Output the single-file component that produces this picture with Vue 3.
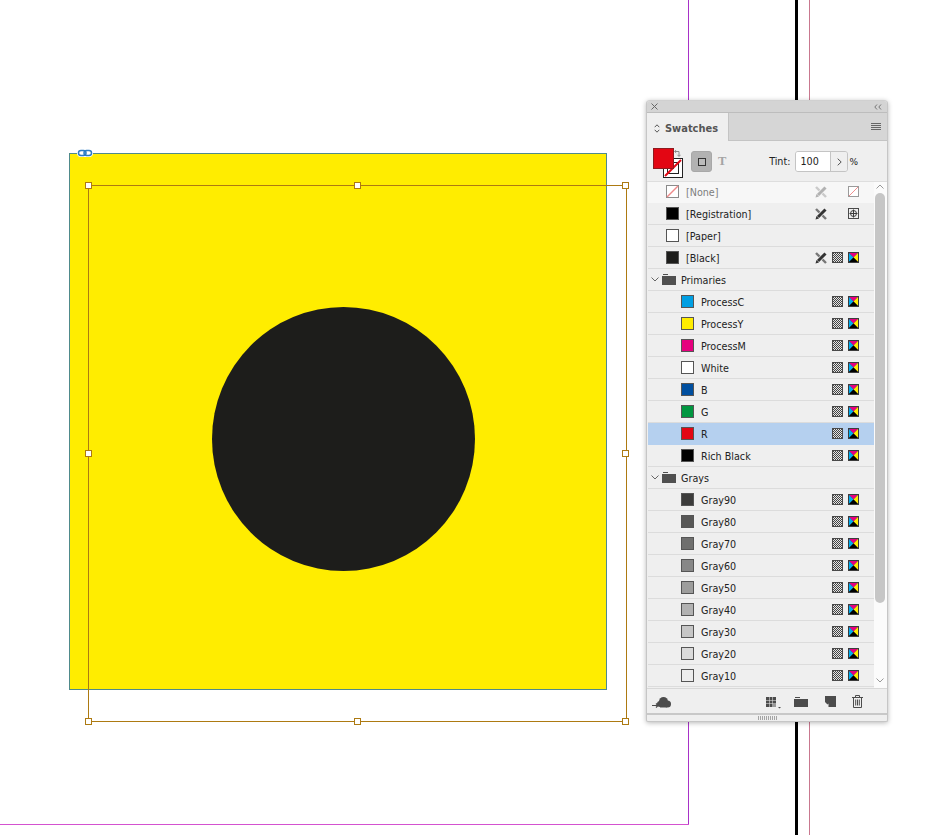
<template>
  <div class="page">
    <!-- icon sprites -->
    <svg class="sprites" width="0" height="0">
      <defs>
        <pattern id="checker" width="2" height="2" patternUnits="userSpaceOnUse">
          <rect width="2" height="2" fill="#e4e4e4" />
          <rect width="1" height="1" fill="#444" />
          <rect x="1" y="1" width="1" height="1" fill="#444" />
        </pattern>
        <symbol id="i-pencil" viewBox="0 0 12 12">
          <path d="M1 1 11 11" stroke="#777" stroke-width="2.4" fill="none" />
          <path d="M10.5 1.5 2.5 9.5" stroke="#f0f0f0" stroke-width="4.2" fill="none" />
          <path d="M10.5 1.5 3 9" stroke="currentColor" stroke-width="3" fill="none" />
          <path d="M.5 11.5 1.5 8 4 10.5Z" fill="currentColor" />
        </symbol>
        <symbol id="i-grid" viewBox="0 0 11 11">
          <rect x=".5" y=".5" width="10" height="10" fill="url(#checker)" stroke="#4a4a4a" />
        </symbol>
        <symbol id="i-cmyk" viewBox="0 0 11 11">
          <rect width="11" height="11" fill="#3c3c3c" />
          <path d="M1 1H10L5.5 5.5Z" fill="#e6007e" />
          <path d="M1 1V10L5.5 5.5Z" fill="#00aeef" />
          <path d="M10 1V10L5.5 5.5Z" fill="#ffed00" />
          <path d="M1 10H10L5.5 5.5Z" fill="#000" />
        </symbol>
        <symbol id="i-reg" viewBox="0 0 11 11">
          <rect x=".5" y=".5" width="10" height="10" fill="none" stroke="#4a4a4a" />
          <circle cx="5.5" cy="5.5" r="3" fill="none" stroke="#3a3a3a" />
          <path d="M5.5 1.5V9.5M1.5 5.5H9.5" stroke="#3a3a3a" />
        </symbol>
        <symbol id="i-none" viewBox="0 0 11 11">
          <rect x=".5" y=".5" width="10" height="10" fill="#fff" stroke="#9a9a9a" />
          <path d="M1 10 10 1" stroke="#ef8f8f" />
        </symbol>
      </defs>
    </svg>

    <!-- layout guides -->
    <div class="guide guide--margin-v"></div>
    <div class="guide guide--margin-h"></div>
    <div class="guide guide--spine"></div>
    <div class="guide guide--bleed"></div>

    <!-- artwork -->
    <div class="art"></div>
    <div class="circle"></div>
    <div class="frame"></div>
    <span v-for="h in handles" :key="h.x + '-' + h.y" class="handle" :style="{ left: h.x + 'px', top: h.y + 'px' }"></span>
    <svg class="link" width="16" height="8" viewBox="0 0 16 8">
      <rect width="16" height="8" rx="4" fill="#fff" />
      <rect x="1.5" y="1.5" width="7.5" height="5" rx="2.5" fill="none" stroke="#2d7cc6" stroke-width="1.5" />
      <rect x="7" y="1.5" width="7.5" height="5" rx="2.5" fill="none" stroke="#2d7cc6" stroke-width="1.5" />
    </svg>

    <!-- swatches panel -->
    <div class="panel">
      <div class="panel-top">
        <svg class="close" width="7" height="7" viewBox="0 0 7 7"><path d="M.5.5 6.5 6.5M6.5.5.5 6.5" stroke="#666" /></svg>
        <svg class="collapse" width="8" height="6" viewBox="0 0 8 6"><path d="M3 .5.8 3 3 5.5M7 .5 4.8 3 7 5.5" stroke="#777" fill="none" /></svg>
      </div>

      <div class="tabs">
        <div class="tab">
          <svg width="6" height="9" viewBox="0 0 6 9"><path d="M.7 3.2 3 .8 5.3 3.2M.7 5.8 3 8.2 5.3 5.8" stroke="#555" fill="none" /></svg>
          <span>Swatches</span>
        </div>
        <div class="menu"><i></i><i></i><i></i><i></i></div>
      </div>

      <div class="controls">
        <div class="fill-stroke">
          <div class="stroke-box">
            <svg width="20" height="20" viewBox="0 0 20 20">
              <rect x=".5" y=".5" width="19" height="19" fill="#fff" stroke="#222" />
              <rect x="4.5" y="4.5" width="11" height="11" fill="none" stroke="#222" />
              <path d="M2 18 18 2" stroke="#e30613" stroke-width="2" />
            </svg>
          </div>
          <div class="fill-box"></div>
          <svg class="swap" width="7" height="7" viewBox="0 0 7 7"><path d="M1 1.5H5V6M3.5 4.8 5 6.5 6.5 4.8M2.2.2.5 1.5 2.2 2.8" stroke="#8a8a8a" fill="none" /></svg>
        </div>
        <div class="apply"><span></span></div>
        <span class="text-t">T</span>
        <span class="tint-label">Tint:</span>
        <div class="tint">
          <span class="tint-value">100</span>
          <span class="tint-step">
            <svg width="5" height="8" viewBox="0 0 5 8"><path d="M.7.7 4.2 4 .7 7.3" stroke="#555" fill="none" /></svg>
          </span>
        </div>
        <span class="percent">%</span>
      </div>

      <div class="list-wrap">
        <div class="list">
          <div
            v-for="r in rows"
            :key="r.name"
            class="row"
            :class="{ 'row--none': r.kind === 'none', 'row--sel': r.name === 'R', 'row--nested': r.nested }"
          >
            <template v-if="r.kind === 'group'">
              <svg class="chev" width="8" height="5" viewBox="0 0 8 5"><path d="M.5.5 4 4 7.5.5" stroke="#666" fill="none" /></svg>
              <svg class="folder" width="14" height="11" viewBox="0 0 14 11"><path d="M0 2H14V11H0ZM1 0H6V1H1Z" fill="#505050" /></svg>
            </template>
            <svg v-else-if="r.kind === 'none'" class="sw" width="13" height="13" viewBox="0 0 13 13">
              <rect x=".5" y=".5" width="12" height="12" fill="#fff" stroke="#8a8a8a" />
              <path d="M1 12 12 1" stroke="#ee8a8a" stroke-width="1.4" />
            </svg>
            <span v-else class="sw" :style="{ background: r.color }"></span>

            <span class="name">{{ r.name }}</span>

            <span class="icons">
              <svg v-if="r.pencil" class="ic ic--pencil" :class="{ 'ic--faded': r.kind === 'none' }"><use href="#i-pencil" /></svg>
              <svg v-if="r.kind === 'none'" class="ic ic--right"><use href="#i-none" /></svg>
              <svg v-else-if="r.reg" class="ic ic--right"><use href="#i-reg" /></svg>
              <template v-else-if="r.mode">
                <svg class="ic"><use href="#i-grid" /></svg>
                <svg class="ic"><use href="#i-cmyk" /></svg>
              </template>
            </span>
          </div>
        </div>
        <div class="scroll">
          <svg class="arrow" width="8" height="5" viewBox="0 0 8 5"><path d="M.5 4.5 4 1 7.5 4.5" stroke="#999" fill="none" /></svg>
          <div class="thumb"></div>
          <svg class="arrow arrow--down" width="8" height="5" viewBox="0 0 8 5"><path d="M.5.5 4 4 7.5.5" stroke="#999" fill="none" /></svg>
        </div>
      </div>

      <div class="footer">
        <svg class="cloud" width="19" height="12" viewBox="0 0 19 12">
          <circle cx="11.5" cy="4.5" r="4.5" fill="#4c4c4c" />
          <circle cx="8" cy="7" r="3" fill="#4c4c4c" />
          <circle cx="15.5" cy="7" r="3.5" fill="#4c4c4c" />
          <path d="M8 7H15V10.5H8Z" fill="#4c4c4c" />
          <path d="M0 8.5H5.5M4 6.5 6 8.5 4 10.5" stroke="#4c4c4c" fill="none" stroke-width="1.2" />
        </svg>
        <svg class="f-grid" width="15" height="12" viewBox="0 0 15 12">
          <path d="M0 0H3V3H0ZM3.5 0H6.5V3H3.5ZM7 0H10V3H7ZM0 3.5H3V6.5H0ZM7 3.5H10V6.5H7ZM0 7H3V10H0ZM3.5 7H6.5V10H3.5ZM3.5 3.5H6.5V6.5H3.5Z" fill="#4c4c4c" />
          <path d="M7 7H10V10H7Z" fill="#9a9a9a" />
          <path d="M12 10H15L13.5 11.5Z" fill="#4c4c4c" />
        </svg>
        <svg class="f-folder" width="14" height="10" viewBox="0 0 14 10"><path d="M0 2H14V10H0ZM1 0H6V1H1Z" fill="#4c4c4c" /></svg>
        <svg class="f-new" width="11" height="11" viewBox="0 0 11 11"><path d="M0 0H11V11H3.5V7.5L2.5 8.5 0 6Z" fill="#4c4c4c" /></svg>
        <svg class="f-trash" width="11" height="13" viewBox="0 0 11 13">
          <path d="M0 2.5H11M3.5 2.5V.5H7.5V2.5M1.5 2.5V12.5H9.5V2.5M3.7 4.5V10.5M5.5 4.5V10.5M7.3 4.5V10.5" stroke="#4c4c4c" fill="none" />
        </svg>
      </div>
      <div class="grip"><span></span></div>
    </div>
  </div>
</template>

<script setup>
const handles = [
  { x: 85, y: 182 }, { x: 354, y: 182 }, { x: 622, y: 182 },
  { x: 85, y: 450 }, { x: 622, y: 450 },
  { x: 85, y: 718 }, { x: 354, y: 718 }, { x: 622, y: 718 },
]

const item = (name, color) => ({ name, color, nested: true, mode: true })

const rows = [
  { name: '[None]', kind: 'none', pencil: true },
  { name: '[Registration]', color: '#000', pencil: true, reg: true },
  { name: '[Paper]', color: '#fff' },
  { name: '[Black]', color: '#1d1d1b', pencil: true, mode: true },
  { name: 'Primaries', kind: 'group' },
  item('ProcessC', '#009fe3'),
  item('ProcessY', '#ffed00'),
  item('ProcessM', '#e6007e'),
  item('White', '#fff'),
  item('B', '#004f9f'),
  item('G', '#009640'),
  item('R', '#e30613'),
  item('Rich Black', '#000'),
  { name: 'Grays', kind: 'group' },
  item('Gray90', '#3c3c3b'),
  item('Gray80', '#575756'),
  item('Gray70', '#6f6f6e'),
  item('Gray60', '#878787'),
  item('Gray50', '#9d9d9c'),
  item('Gray40', '#b2b2b2'),
  item('Gray30', '#c6c6c6'),
  item('Gray20', '#dadada'),
  item('Gray10', '#ededed'),
]
</script>

<style scoped>
.page {
  position: relative;
  width: 942px;
  height: 835px;
  overflow: hidden;
  background: #fff;
  font-family: "DejaVu Sans", sans-serif;
  color: #222;
}
.sprites { position: absolute; }

.guide { position: absolute; }
.guide--margin-v { left: 688px; top: 0; width: 1px; height: 825px; background: #a832c8; }
.guide--margin-h { left: 0; top: 824px; width: 689px; height: 1px; background: #d452d0; }
.guide--spine { left: 795px; top: 0; width: 3px; height: 835px; background: #000; }
.guide--bleed { left: 809px; top: 0; width: 1px; height: 835px; background: #c9788f; }

.art {
  position: absolute;
  left: 69px;
  top: 153px;
  width: 536px;
  height: 535px;
  background: #ffed00;
  border: 1px solid #4f8a8b;
}
.circle {
  position: absolute;
  left: 212px;
  top: 307px;
  width: 263px;
  height: 264px;
  border-radius: 50%;
  background: #1d1d1b;
}
.frame {
  position: absolute;
  left: 88px;
  top: 185px;
  width: 537px;
  height: 535px;
  border: 1px solid #ad7a12;
}
.handle {
  position: absolute;
  width: 5px;
  height: 5px;
  background: #fff;
  border: 1px solid #ad7a12;
}
.link { position: absolute; left: 77px; top: 149px; }

.panel {
  position: absolute;
  left: 646px;
  top: 100px;
  width: 242px;
  height: 622px;
  box-sizing: border-box;
  display: flex;
  flex-direction: column;
  background: #efefef;
  border: 1px solid #c6c6c6;
  border-top-color: #d0d0d0;
  border-radius: 4px 4px 2px 2px;
  box-shadow: 0 1px 5px rgba(0, 0, 0, 0.28);
}
.panel-top {
  height: 11px;
  display: flex;
  align-items: center;
  justify-content: space-between;
  padding: 0 5px 0 4px;
  background: #d4d4d4;
  border-bottom: 1px solid #bdbdbd;
  border-radius: 3px 3px 0 0;
}
.tabs {
  height: 27px;
  display: flex;
  justify-content: space-between;
  background: #d6d6d6;
  border-bottom: 1px solid #c4c4c4;
}
.tab {
  width: 82px;
  margin-bottom: -1px;
  display: flex;
  align-items: center;
  gap: 5px;
  padding: 2px 0 0 7px;
  box-sizing: border-box;
  background: #efefef;
  border-right: 1px solid #c4c4c4;
  font-size: 9.9px;
  font-weight: 700;
  color: #555;
}
.menu {
  display: flex;
  flex-direction: column;
  justify-content: center;
  gap: 1px;
  margin-right: 6px;
}
.menu i { display: block; width: 10px; height: 1px; background: #666; }

.controls {
  height: 40px;
  box-sizing: border-box;
  padding-top: 1px;
  display: flex;
  align-items: center;
  position: relative;
}
.fill-stroke {
  position: relative;
  align-self: flex-start;
  width: 31px;
  height: 31px;
  margin: 6px 0 0 6px;
}
.fill-box {
  position: absolute;
  left: 0;
  top: 0;
  width: 19px;
  height: 19px;
  background: #e30613;
  border: 1px solid #8e1b1f;
}
.stroke-box { position: absolute; left: 10px; top: 10px; width: 20px; height: 20px; }
.swap { position: absolute; left: 21px; top: 2px; }
.apply {
  width: 21px;
  height: 21px;
  margin-left: 7px;
  display: flex;
  align-items: center;
  justify-content: center;
  background: #b2b2b2;
  border: 1px solid #a8a8a8;
  box-sizing: border-box;
  border-radius: 3px;
}
.apply span { width: 6px; height: 6px; border: 1px solid #333; background: #bbb; }
.text-t {
  margin-left: 6px;
  font-family: "Liberation Serif", serif;
  font-size: 12.5px;
  font-weight: 700;
  color: #a4a4a4;
}
.tint-label { margin-left: auto; font-size: 9.6px; color: #222; }
.tint {
  display: flex;
  width: 53px;
  height: 21px;
  margin-left: 5px;
  box-sizing: border-box;
  border: 1px solid #c4c4c4;
  border-radius: 3px;
  overflow: hidden;
}
.tint-value {
  width: 34px;
  padding-left: 4px;
  box-sizing: border-box;
  background: #fff;
  font-size: 9.6px;
  line-height: 20px;
}
.tint-step {
  flex: 1;
  display: flex;
  align-items: center;
  justify-content: center;
  background: #efefef;
  border-left: 1px solid #c4c4c4;
}
.percent { margin: 0 29px 0 1px; font-size: 9px; }

.list-wrap {
  height: 507px;
  flex: none;
  display: flex;
  overflow: hidden;
  border-top: 1px solid #dedede;
  box-sizing: border-box;
}
.list { flex: 1; padding-left: 1px; min-width: 0; margin-top: -1px; }
.row {
  height: 22px;
  box-sizing: border-box;
  display: flex;
  align-items: center;
  border-bottom: 1px solid #dcdcdc;
  padding-left: 18px;
  font-size: 9.6px;
  color: #222;
}
.row--nested { padding-left: 33px; }
.row--none { background: #f7f7f7; color: #7d7d7d; border-bottom-color: #f7f7f7; }
.row--sel { background: #b5d0ef; border-bottom-color: #b5d0ef; }
.sw {
  flex: none;
  width: 13px;
  height: 13px;
  box-sizing: border-box;
  border: 1px solid #555;
}
svg.sw { border: 0; }
.name { margin-left: 7px; padding-top: 2px; white-space: nowrap; }
.chev { margin-left: -15px; margin-right: 3px; }
.folder { margin-right: -2px; }
.icons {
  margin-left: auto;
  display: flex;
  align-items: center;
  gap: 5px;
  padding-right: 15px;
}
.ic { width: 11px; height: 11px; display: block; }
.ic--pencil { width: 12px; height: 12px; color: #333; }
.ic--faded { opacity: 0.35; }
.ic--right { margin-left: 16px; }

.scroll {
  position: relative;
  width: 13px;
  flex: none;
  background: #fbfbfb;
}
.arrow { position: absolute; left: 2px; top: 2px; }
.arrow--down { top: auto; bottom: 5px; }
.thumb {
  position: absolute;
  left: 1px;
  top: 11px;
  width: 10px;
  height: 410px;
  border-radius: 5px;
  background: #c6c6c6;
}

.footer {
  height: 27px;
  flex: none;
  position: relative;
  display: flex;
  align-items: center;
  padding-top: 1px;
  border-top: 1px solid #d8d8d8;
  border-bottom: 2px solid #c8c8c8;
  box-sizing: border-box;
}
.cloud { margin: 2px 0 0 5px; }
.f-grid { margin: 2px 0 0 auto; }
.f-folder { margin: 1px 0 0 13px; }
.f-new { margin-left: 17px; }
.f-trash { margin: 0 24px 0 16px; }

.grip {
  flex: 1;
  display: flex;
  align-items: center;
  justify-content: center;
}
.grip span {
  width: 19px;
  height: 4px;
  background: repeating-linear-gradient(90deg, #a4a4a4 0 1px, transparent 1px 2px);
}
</style>

<style>
html, body { margin: 0; background: #fff; }
</style>
